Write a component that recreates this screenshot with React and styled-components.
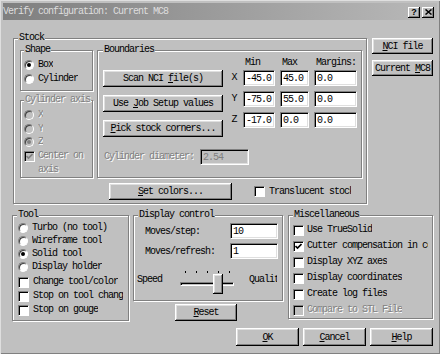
import React from "react";
import styled, { createGlobalStyle } from "styled-components";

const GlobalStyle = createGlobalStyle`
  html, body { margin: 0; padding: 0; background: #c0c0c0; }
  body {
    font-family: "Liberation Mono", "DejaVu Sans Mono", monospace;
    font-size: 10px;
    letter-spacing: -1px;
    color: #000;
  }
  * { box-sizing: border-box; }
`;

const disabledText = `
  color: #808080;
  text-shadow: 1px 1px 0 #fff;
`;

const Window = styled.div`
  width: 440px;
  height: 354px;
  padding: 3px;
  background: #c0c0c0;
  box-shadow: inset 1px 1px #dfdfdf, inset -1px -1px #808080;
  display: flex;
  flex-direction: column;
  overflow: hidden;
`;

const TitleBar = styled.div`
  height: 17px;
  flex: none;
  display: flex;
  align-items: center;
  justify-content: space-between;
  padding: 0 3px 0 0;
  background: linear-gradient(90deg, #7f7f7f 0%, #9c9c9c 50%, #b9b9b9 100%);
`;

const TitleText = styled.span`
  color: #dedede;
  line-height: 17px;
  white-space: nowrap;
`;

const TitleButtons = styled.div`
  display: flex;
  gap: 2px;
  padding-top: 1px;
`;

const TitleButton = styled.div`
  width: 12px;
  height: 11px;
  background: #c0c0c0;
  box-shadow: inset -1px -1px #000, inset 1px 1px #fff, inset -2px -2px #808080;
  display: flex;
  align-items: center;
  justify-content: center;
  font-family: "Liberation Sans", Arial, sans-serif;
  font-weight: bold;
  font-size: 9px;
  letter-spacing: 0;
  line-height: 1;
`;

const Body = styled.div`
  display: flex;
  flex-direction: column;
  padding: 0 4px 0 9px;
`;

const Row = styled.div`
  display: flex;
  align-items: ${(p) => p.$align || "flex-start"};
  gap: ${(p) => p.$gap || 0}px;
  margin-top: ${(p) => p.$mt || 0}px;
  padding-left: ${(p) => p.$pl || 0}px;
  justify-content: ${(p) => p.$justify || "flex-start"};
`;

const Column = styled.div`
  display: flex;
  flex-direction: column;
  gap: ${(p) => p.$gap || 0}px;
  margin-top: ${(p) => p.$mt || 0}px;
  margin-left: ${(p) => p.$ml || 0}px;
  width: ${(p) => (p.$w ? `${p.$w}px` : "auto")};
  flex: none;
`;

const Group = styled.div`
  position: relative;
  flex: none;
  width: ${(p) => p.$w}px;
  height: ${(p) => p.$h}px;
  margin-left: ${(p) => p.$ml || 0}px;
  padding: ${(p) => p.$pad || "0"};
  border: 1px solid #808080;
  box-shadow: 1px 1px 0 #fff, inset 1px 1px 0 #fff;
  display: flex;
  flex-direction: column;
`;

const Legend = styled.span`
  position: absolute;
  top: -7px;
  left: ${(p) => p.$x ?? 4}px;
  padding: 0 1px;
  background: #c0c0c0;
  line-height: 12px;
  white-space: nowrap;
  ${(p) => (p.$disabled ? disabledText : "")}
`;

const Option = styled.div`
  display: flex;
  align-items: ${(p) => (p.$wrap ? "flex-start" : "center")};
  gap: ${(p) => p.$gap ?? 4}px;
  height: ${(p) => p.$h}px;
  line-height: ${(p) => (p.$wrap ? "14px" : "12px")};
  ${(p) => (p.$disabled ? disabledText : "")}
`;

const OptionText = styled.span`
  display: block;
  white-space: ${(p) => (p.$wrap ? "normal" : "nowrap")};
  overflow: hidden;
  width: ${(p) => (p.$w ? `${p.$w}px` : "auto")};
`;

const Radio = styled.span`
  position: relative;
  flex: none;
  width: 10px;
  height: 10px;
  border-radius: 50%;
  border: 1px solid;
  border-color: #808080 #fff #fff #808080;
  background: ${(p) => (p.$disabled ? "#c0c0c0" : "#fff")};
  box-shadow: inset 1px 1px 0 #404040;
  &::after {
    content: "";
    display: ${(p) => (p.$checked ? "block" : "none")};
    position: absolute;
    left: 2px;
    top: 2px;
    width: 4px;
    height: 4px;
    border-radius: 50%;
    background: ${(p) => (p.$disabled ? "#808080" : "#000")};
  }
`;

const Box = styled.span`
  flex: none;
  width: 11px;
  height: 11px;
  margin-top: ${(p) => p.$mt || 0}px;
  border: 1px solid;
  border-color: #808080 #fff #fff #808080;
  background: ${(p) => (p.$disabled ? "#c0c0c0" : "#fff")};
  color: ${(p) => (p.$disabled ? "#808080" : "#000")};
  box-shadow: inset 1px 1px 0 #000;
  display: flex;
  align-items: center;
  justify-content: center;
  svg { display: block; }
`;

const Button = styled.button`
  flex: none;
  width: ${(p) => p.$w}px;
  height: ${(p) => p.$h || 17}px;
  margin-left: ${(p) => p.$ml || 0}px;
  margin-top: ${(p) => p.$mt || 0}px;
  padding: 0;
  border: none;
  background: #c0c0c0;
  font: inherit;
  letter-spacing: inherit;
  color: #000;
  box-shadow: inset -1px -1px #000, inset 1px 1px #fff, inset -2px -2px #808080,
    inset 2px 2px #dfdfdf;
  display: flex;
  align-items: center;
  justify-content: center;
  white-space: pre;
  u { text-decoration: underline; text-underline-offset: 1px; }
`;

const Field = styled.input`
  flex: none;
  width: ${(p) => p.$w}px;
  height: 16px;
  margin: 0;
  padding: 0 0 0 2px;
  border: 1px solid;
  border-color: #808080 #fff #fff #808080;
  box-shadow: inset 1px 1px 0 #000, inset -1px -1px 0 #dfdfdf;
  background: ${(p) => (p.$disabled ? "#c0c0c0" : "#fff")};
  color: ${(p) => (p.$disabled ? "#808080" : "#000")};
  font: inherit;
  letter-spacing: inherit;
  outline: none;
`;

const Label = styled.span`
  flex: none;
  white-space: nowrap;
  overflow: hidden;
  width: ${(p) => (p.$w ? `${p.$w}px` : "auto")};
  padding-top: ${(p) => p.$pt || 0}px;
  padding-left: ${(p) => p.$pl || 0}px;
  margin-left: ${(p) => p.$ml || 0}px;
  line-height: 12px;
  ${(p) => (p.$disabled ? disabledText : "")}
`;

const CoordGrid = styled.div`
  display: grid;
  grid-template-columns: 8px 32px 29px 43px;
  grid-template-rows: 7px 16px 16px 16px;
  column-gap: 5px;
  row-gap: 5px;
  align-items: center;
`;

const HeadCell = styled.span`
  align-self: start;
  line-height: 10px;
  padding-left: 2px;
  white-space: nowrap;
`;

const AxisCell = styled.span`
  text-align: center;
  line-height: 12px;
`;

const FieldRow = styled.div`
  display: flex;
  align-items: center;
  justify-content: space-between;
  height: 16px;
  padding-left: 8px;
`;

const SliderBox = styled.div`
  flex: none;
  width: 54px;
  height: 26px;
  display: flex;
  flex-direction: column;
`;

const Ticks = styled.div`
  display: flex;
  justify-content: space-between;
  padding: 1px 4px 0 5px;
  height: 4px;
`;

const Tick = styled.span`
  width: 1px;
  height: 2px;
  background: #000;
`;

const TrackArea = styled.div`
  position: relative;
  height: 22px;
`;

const Track = styled.div`
  margin-top: 8px;
  height: 4px;
  border: 1px solid;
  border-color: #808080 #fff #fff #808080;
  box-shadow: inset 1px 1px 0 #000;
`;

const Thumb = styled.div`
  position: absolute;
  top: 0;
  width: 10px;
  height: 20px;
  background: #c0c0c0;
  box-shadow: inset -1px -1px #000, inset 1px 1px #fff, inset -2px -2px #808080,
    inset 2px 2px #dfdfdf;
`;

const Check = () => (
  <svg width="7" height="7" viewBox="0 0 7 7">
    <path d="M0.5 3 L2.5 5 L6.5 1" fill="none" stroke="currentColor" strokeWidth="1.6" />
  </svg>
);

const RadioOption = ({ label, checked, disabled, h = 14 }) => (
  <Option $h={h} $disabled={disabled}>
    <Radio $checked={checked} $disabled={disabled} />
    <OptionText>{label}</OptionText>
  </Option>
);

const CheckOption = ({ label, checked, disabled, h = 16, clip, wrap, gap }) => (
  <Option $h={h} $disabled={disabled} $wrap={wrap} $gap={gap}>
    <Box $disabled={disabled} $mt={wrap ? 2 : 0}>
      {checked && <Check />}
    </Box>
    <OptionText $w={clip} $wrap={wrap}>
      {label}
    </OptionText>
  </Option>
);

const Slider = ({ ticks = 5, value = 3 }) => {
  const step = 11;
  return (
    <SliderBox>
      <Ticks>
        {Array.from({ length: ticks }).map((_, i) => (
          <Tick key={i} />
        ))}
      </Ticks>
      <TrackArea>
        <Track />
        <Thumb style={{ left: value * step }} />
      </TrackArea>
    </SliderBox>
  );
};

// Button caption with one underlined mnemonic letter
const Caption = ({ before = "", mn, after = "" }) => (
  <span>
    {before}
    <u>{mn}</u>
    {after}
  </span>
);

const coords = [
  ["X", "-45.0", "45.0", "0.0"],
  ["Y", "-75.0", "55.0", "0.0"],
  ["Z", "-17.0", "0.0", "0.0"],
];

export default function App() {
  return (
    <>
      <GlobalStyle />
      <Window>
        <TitleBar>
          <TitleText>Verify configuration: Current MC8</TitleText>
          <TitleButtons>
            <TitleButton>?</TitleButton>
            <TitleButton>
              <svg width="7" height="6" viewBox="0 0 7 6">
                <path d="M0.5 0.5 L6.5 5.5 M6.5 0.5 L0.5 5.5" stroke="#000" strokeWidth="1.5" />
              </svg>
            </TitleButton>
          </TitleButtons>
        </TitleBar>

        <Body>
          <Row $mt={18}>
            <Group $w={354} $h={166} $ml={1} $pad="11px 0 0 6px">
              <Legend $x={4}>Stock</Legend>
              <Row $gap={4}>
                <Column $w={73} $gap={9}>
                  <Group $w={73} $h={41} $pad="7px 0 0 3px">
                    <Legend $x={3}>Shape</Legend>
                    <RadioOption label="Box" checked />
                    <RadioOption label="Cylinder" />
                  </Group>
                  <Group $w={73} $h={78} $pad="7px 0 0 3px">
                    <Legend $x={3} $disabled>
                      Cylinder axis
                    </Legend>
                    <RadioOption label="X" disabled />
                    <RadioOption label="Y" disabled />
                    <RadioOption label="Z" checked disabled />
                    <CheckOption label="Center on axis" checked disabled wrap h={28} clip={52} gap={3} />
                  </Group>
                </Column>

                <Group $w={265} $h={128} $pad="7px 0 0 5px">
                  <Legend $x={5}>Boundaries</Legend>
                  <Row $gap={7}>
                    <Column $mt={12} $gap={8}>
                      <Button $w={120}>
                        <Caption before="Scan NCI " mn="f" after="ile(s)" />
                      </Button>
                      <Button $w={120}>
                        <Caption before="Use " mn="J" after="ob Setup values" />
                      </Button>
                      <Button $w={120}>
                        <Caption mn="P" after="ick stock corners..." />
                      </Button>
                    </Column>
                    <CoordGrid>
                      <span />
                      <HeadCell>Min</HeadCell>
                      <HeadCell>Max</HeadCell>
                      <HeadCell>Margins:</HeadCell>
                      {coords.map(([axis, min, max, margin]) => (
                        <React.Fragment key={axis}>
                          <AxisCell>{axis}</AxisCell>
                          <Field $w={32} readOnly defaultValue={min} />
                          <Field $w={29} readOnly defaultValue={max} />
                          <Field $w={43} readOnly defaultValue={margin} />
                        </React.Fragment>
                      ))}
                    </CoordGrid>
                  </Row>
                  <Row $mt={12} $pl={1} $gap={6} $align="center">
                    <Label $w={90} $disabled>
                      Cylinder diameter:
                    </Label>
                    <Field $w={49} $disabled readOnly defaultValue="2.54" />
                  </Row>
                </Group>
              </Row>
              <Row $mt={5} $pl={89} $gap={22} $align="center">
                <Button $w={123}>
                  <Caption mn="S" after="et colors..." />
                </Button>
                <CheckOption label="Translucent stock" h={17} clip={82} />
              </Row>
            </Group>

            <Column $ml={5} $gap={6}>
              <Button $w={61} $h={16}>
                <Caption mn="N" after="CI file" />
              </Button>
              <Button $w={61} $h={16}>
                <Caption before="Current " mn="M" after="C8" />
              </Button>
            </Column>
          </Row>

          <Row $mt={11} $gap={4}>
            <Group $w={117} $h={106} $pad="5px 0 0 5px">
              <Legend $x={4}>Tool</Legend>
              <RadioOption label="Turbo (no tool)" h={13} />
              <RadioOption label="Wireframe tool" h={13} />
              <RadioOption label="Solid tool" checked h={13} />
              <RadioOption label="Display holder" h={13} />
              <Column $mt={2}>
                <CheckOption label="Change tool/color" h={14} />
                <CheckOption label="Stop on tool change" h={14} clip={90} />
                <CheckOption label="Stop on gouge" h={14} />
              </Column>
            </Group>

            <Column>
              <Group $w={150} $h={86} $pad="7px 4px 0 3px">
                <Legend $x={4}>Display control</Legend>
                <Column $gap={4}>
                  <FieldRow>
                    <span>Moves/step:</span>
                    <Field $w={48} readOnly defaultValue="10" />
                  </FieldRow>
                  <FieldRow>
                    <span>Moves/refresh:</span>
                    <Field $w={48} readOnly defaultValue="1" />
                  </FieldRow>
                </Column>
                <Row $mt={11}>
                  <Label $w={43} $pt={4}>
                    Speed
                  </Label>
                  <Slider ticks={5} value={3} />
                  <Label $w={28} $pt={4} $ml={15}>
                    Quality
                  </Label>
                </Row>
              </Group>
              <Button $w={62} $ml={42} $mt={3}>
                <Caption mn="R" after="eset" />
              </Button>
            </Column>

            <Group $w={145} $h={104} $ml={1} $pad="6px 0 0 4px">
              <Legend $x={4}>Miscellaneous</Legend>
              <CheckOption label="Use TrueSolid" gap={3} />
              <CheckOption label="Cutter compensation in control" checked clip={121} gap={3} />
              <CheckOption label="Display XYZ axes" gap={3} />
              <CheckOption label="Display coordinates" gap={3} />
              <CheckOption label="Create log files" gap={3} />
              <CheckOption label="Compare to STL File" disabled gap={3} />
            </Group>
          </Row>

          <Row $mt={7} $gap={4} $justify="flex-end">
            <Button $w={63} $h={18}>
              <Caption mn="O" after="K" />
            </Button>
            <Button $w={63} $h={18}>
              <Caption mn="C" after="ancel" />
            </Button>
            <Button $w={63} $h={18}>
              <Caption mn="H" after="elp" />
            </Button>
          </Row>
        </Body>
      </Window>
    </>
  );
}
